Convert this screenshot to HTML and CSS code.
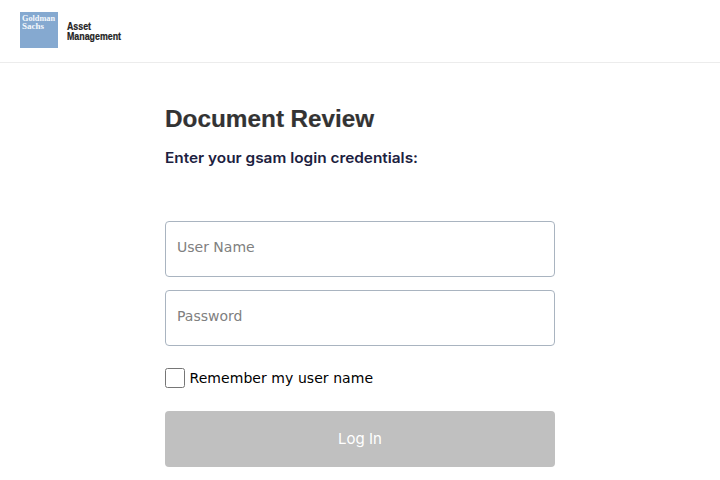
FILE: index.html
```html
<!DOCTYPE html>
<html lang="en">
<head>
<meta charset="utf-8">
<title>Document Review</title>
<link rel="stylesheet" href="styles.css">
</head>
<body>
<header class="header">
<div class="logo">
<div class="logo-box"><svg width="38" height="36"><text x="2" y="9" textLength="33" lengthAdjust="spacingAndGlyphs">Goldman</text><text x="2" y="16.5" textLength="22" lengthAdjust="spacingAndGlyphs">Sachs</text></svg></div>
<svg class="logo-name" width="60" height="36"><text x="0" y="18" textLength="24" lengthAdjust="spacingAndGlyphs">Asset</text><text x="0" y="27.5" textLength="54" lengthAdjust="spacingAndGlyphs">Management</text></svg>
</div>
</header>
<main class="main">
<h1><svg width="390" height="32"><text x="0" y="24" textLength="119" lengthAdjust="spacingAndGlyphs">Document</text><text x="125.5" y="24" textLength="83.5" lengthAdjust="spacingAndGlyphs">Review</text></svg></h1>
<h2><svg width="390" height="22"><text x="0" y="15.5" textLength="253" lengthAdjust="spacingAndGlyphs">Enter your gsam login credentials:</text></svg></h2>
<form class="form">
<input class="field" type="text" placeholder="User Name">
<input class="field" type="password" placeholder="Password">
<label class="remember"><input type="checkbox" class="check"><span>Remember my user name</span></label>
<button class="submit" type="button">Log In</button>
</form>
</main>
</body>
</html>
```
FILE: styles.css
```css
* { box-sizing: border-box; }
body { margin: 0; background: #fff; font-family: "DejaVu Sans", sans-serif; overflow: hidden; }
svg { display: block; overflow: visible; }
.header { height: 63px; border-bottom: 1px solid #ececec; padding: 12px 20px; }
.logo { display: flex; gap: 9px; }
.logo-box { width: 38px; height: 36px; background: #85a9d0; }
.logo-box text { font: bold 9px "Liberation Serif", serif; fill: #f4f8fc; }
.logo-name text { font: bold 10px "Liberation Sans", sans-serif; fill: #222; stroke: #222; stroke-width: .2px; }
.main { width: 390px; margin: 40px auto 0; }
h1, h2 { margin: 0; }
h1 text { font: bold 24px "Liberation Sans", sans-serif; fill: #333; stroke: #333; stroke-width: .2px; }
h2 { margin-top: 12px; }
h2 text { font: 600 14.5px Inter, sans-serif; fill: #1c2140; }
.form { margin-top: 52px; display: flex; flex-direction: column; }
.field { width: 390px; height: 56px; margin: 0 0 13px; padding: 0 11px 4px; border: 1px solid #a9b4c0; border-radius: 4px; font: 14px "DejaVu Sans", sans-serif; background: #fff; }
.field::placeholder { color: #808080; }
.remember { display: flex; align-items: center; gap: 4.5px; height: 20px; margin-top: 9px; font-size: 14px; letter-spacing: .06px; }
.check { width: 20px; height: 20px; margin: 0; }
.submit { height: 56px; margin-top: 23px; padding: 0 0 2px; border: 0; border-radius: 4px; background: #c0c0c0; color: #fff; font: 15px Inter, sans-serif; }
```
